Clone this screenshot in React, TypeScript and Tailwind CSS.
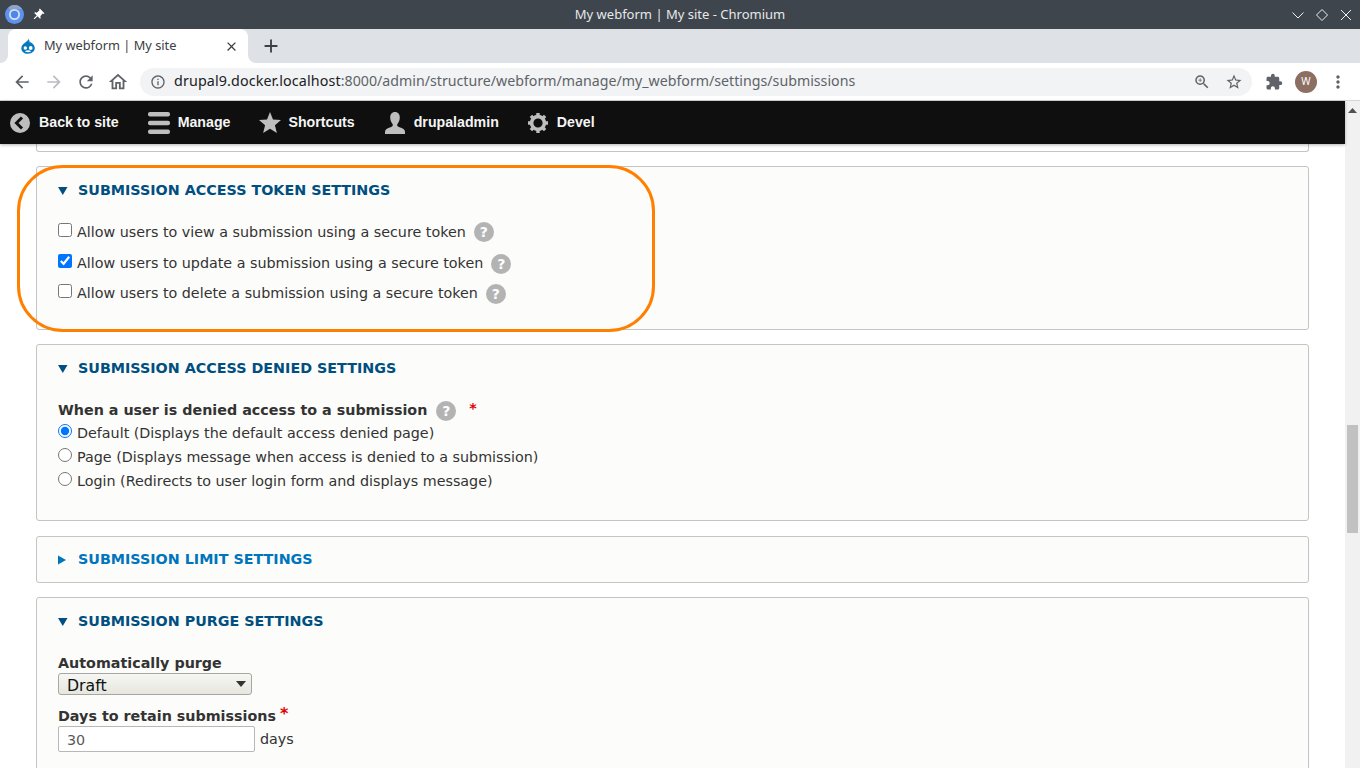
import React from 'react';
import { MdArrowBack, MdArrowForward, MdRefresh, MdOutlineHome, MdInfoOutline, MdZoomIn, MdStarBorder, MdExtension, MdMoreVert, MdAdd, MdClose, MdPushPin } from 'react-icons/md';

const DEJAVU = "font-['DejaVu_Sans',sans-serif]";
const CHROME_FONT = "font-['Noto_Sans',sans-serif]";

function HelpIcon({ className = '' }: { className?: string }) {
  return (
    <span className={`inline-flex h-5 w-5 shrink-0 items-center justify-center rounded-full bg-[#b3b3b3] text-[14px] font-bold leading-none text-white ${className}`}>
      ?
    </span>
  );
}

function Summary({ title, open = true }: { title: string; open?: boolean }) {
  return (
    <div className={`flex items-center pl-[21px] text-[14.3px] font-bold ${open ? 'h-[47px] text-[#004f80]' : 'h-[45px] text-[#0074bd]'}`}>
      <svg width="10" height="10" viewBox="0 0 10 10" className="mr-[10px] shrink-0" fill="currentColor">
        {open ? <path d="M0 1h9.500L4.750 9z" /> : <path d="M0 0.500 8 5 0 9.500z" />}
      </svg>
      <span>{title}</span>
    </div>
  );
}

function Panel({ title, open = true, className = '', children }: { title: string; open?: boolean; className?: string; children?: React.ReactNode }) {
  return (
    <section className={`rounded-[3px] border border-[#c4c4c4] bg-[#fcfcfa] ${className}`}>
      <Summary title={title} open={open} />
      {children}
    </section>
  );
}

function CheckRow({ label, checked = false, className = '', helpClass = 'ml-2' }: { label: string; checked?: boolean; className?: string; helpClass?: string }) {
  return (
    <div className={`flex h-5 items-center ${className}`}>
      <input type="checkbox" defaultChecked={checked} className="mr-[5px] h-[14px] w-[14px] -translate-y-[2px] accent-[#0075ff]" />
      <span className="translate-y-px">{label}</span>
      <HelpIcon className={helpClass} />
    </div>
  );
}

function RadioRow({ label, checked = false }: { label: string; checked?: boolean }) {
  return (
    <div className="flex h-6 items-center">
      <input type="radio" name="denied" defaultChecked={checked} className="mr-[5px] h-[14px] w-[14px] -translate-y-px accent-[#0075ff]" />
      <span className="translate-y-[2px]">{label}</span>
    </div>
  );
}

function ToolbarItem({ icon, label, boxClass = 'w-[22px]' }: { icon: React.ReactNode; label: string; boxClass?: string }) {
  return (
    <div className="flex items-center gap-2">
      <span className={`flex h-[22px] items-center justify-center ${boxClass}`}>{icon}</span>
      <span>{label}</span>
    </div>
  );
}

export default function App() {
  return (
    <div className="flex h-screen w-[1360px] flex-col overflow-hidden bg-white">
      {/* window title */}
      <div className={`flex h-[29px] shrink-0 items-center bg-[#3e454d] text-[13px] text-[#e6e8ea] ${CHROME_FONT}`}>
        <div className="flex w-[200px] items-center">
          <svg width="19" height="19" viewBox="0 0 19 19" className="ml-[5px]">
            <circle cx="9.500" cy="9.500" r="9.500" fill="#5f92ee" />
            <path d="M9.500 4H17a8.500 8.500 0 0 0-13.500-1.500L6 7a4.500 4.500 0 0 1 3.500-3z" fill="#8fa3c4" />
            <circle cx="9.500" cy="9.500" r="4.600" fill="#4f86e6" stroke="#d2e0f5" strokeWidth="1.800" />
          </svg>
          <MdPushPin className="ml-[7px] rotate-45 text-white" size={14} />
        </div>
        <div className="flex-1 text-center">My webform | My site - Chromium</div>
        <div className="flex w-[200px] items-center justify-end gap-[8px] pr-[6px]">
          <svg width="16" height="16" viewBox="0 0 16 16" fill="none" stroke="#eef0f1" strokeWidth="1"><path d="M2.500 5.500 8 11l5.500-5.500" /></svg>
          <svg width="16" height="16" viewBox="0 0 16 16" fill="none" stroke="#eef0f1" strokeWidth="1"><path d="M8 2.500 13.500 8 8 13.500 2.500 8z" /></svg>
          <svg width="16" height="16" viewBox="0 0 16 16" fill="none" stroke="#eef0f1" strokeWidth="1"><path d="m3 3 10 10M13 3 3 13" /></svg>
        </div>
      </div>

      {/* tab strip */}
      <div className={`flex h-[34px] shrink-0 bg-[#dee1e6] text-[12.8px] text-[#3c4043] ${CHROME_FONT}`}>
        <div className="w-2 bg-white"><div className="h-full rounded-br-lg bg-[#dee1e6]" /></div>
        <div className="flex w-[240px] items-center rounded-t-lg bg-white pl-[12px] pr-[9px]">
          <svg width="16" height="16" viewBox="0 0 16 16">
            <path d="M8.500 0.300C8.700 2.400 6.500 3.500 5 4.700 3.200 6 1.300 7.500 1.300 10.200 1.300 13.500 4.200 15.800 8 15.800s6.800-2.400 6.800-5.700c0-2.800-2-4.300-3.700-5.500C9.600 3.500 8.800 2.300 8.500 0.300z" fill="#0678be" />
            <path d="M9 1.800c.3 1.300 1 2 2 2.800-1 .3-1.800-.2-2.400-.8.500-.5.600-1.200.4-2z" fill="#7fc2ee" />
            <circle cx="5.300" cy="10" r="1.700" fill="#ffffff" />
            <circle cx="10.700" cy="10" r="1.900" fill="#ffffff" />
            <path d="M4.800 13.200c2 -1.200 4.500-1.200 6.400 0-1.800 1.400-4.600 1.400-6.400 0z" fill="#ffffff" />
          </svg>
          <span className="ml-2 flex-1">My webform | My site</span>
          <MdClose size={15} className="text-[#3c4043]" />
        </div>
        <div className="w-2 bg-white"><div className="h-full rounded-bl-lg bg-[#dee1e6]" /></div>
        <div className="ml-[4px] flex items-center">
          <MdAdd size={22} className="text-[#3c4043]" />
        </div>
      </div>

      {/* address bar */}
      <div className={`flex h-[38px] shrink-0 items-center border-b border-[#d3d5d8] bg-white text-[#5f6368] ${CHROME_FONT}`}>
        <MdArrowBack size={20} className="ml-3" />
        <MdArrowForward size={20} className="ml-3 text-[#b9bcc0]" />
        <MdRefresh size={20} className="ml-3" />
        <MdOutlineHome size={22} className="ml-[11px]" />
        <div className="ml-[11px] flex h-7 w-[1112px] items-center rounded-full bg-[#f1f3f4]">
          <MdInfoOutline size={16} className="ml-[10px]" />
          <span className="ml-[8px] -translate-y-px text-[14.3px] tracking-[0.12px] text-[#202124]">drupal9.docker.localhost</span>
          <span className="-translate-y-px text-[14.2px]">:8000/admin/structure/webform/manage/my_webform/settings/submissions</span>
          <MdZoomIn size={18} className="ml-auto" />
          <MdStarBorder size={18} className="ml-[14px] mr-[9px]" />
        </div>
        <MdExtension size={18} className="ml-[13px]" />
        <span className="ml-[12px] flex h-[22px] w-[22px] items-center justify-center rounded-full bg-[#8d6e63] text-[10px] text-white">W</span>
        <MdMoreVert size={20} className="ml-[11px]" />
      </div>

      {/* page */}
      <div className="flex min-h-0 flex-1">
        <div className="flex min-w-0 flex-1 flex-col">
          <div className="relative z-10 flex h-[43px] shrink-0 items-center gap-[29px] bg-[#0f0f0f] pl-[9px] font-['Liberation_Sans',sans-serif] text-[14.2px] font-bold text-[#f5f5f5] shadow-[0_1px_3px_rgba(0,0,0,0.3)]">
            <ToolbarItem label="Back to site" icon={
              <svg width="20" height="20" viewBox="0 0 20 20"><circle cx="10" cy="10" r="10" fill="#bebebe" /><path d="M12 4.500 6.500 10l5.500 5.500" fill="none" stroke="#0f0f0f" strokeWidth="3" /></svg>
            } />
            <ToolbarItem label="Manage" icon={
              <svg width="22" height="22" viewBox="0 0 22 22" fill="#bebebe"><rect y="0" width="22" height="4.500" rx="2" /><rect y="8.700" width="22" height="4.500" rx="2" /><rect y="17.500" width="22" height="4.500" rx="2" /></svg>
            } />
            <ToolbarItem label="Shortcuts" boxClass="w-[21px]" icon={
              <svg width="22" height="21" viewBox="0 0 22 21" fill="#bebebe" className="shrink-0"><path d="m11 0 3 7.500 8 .6-6.100 5.100 2 7.800L11 16.700 4.100 21l2-7.800L0 8.100l8-.6z" /></svg>
            } />
            <ToolbarItem label="drupaladmin" icon={
              <svg width="22" height="22" viewBox="0 0 22 22" fill="#bebebe"><path d="M11 0c3.200 0 4.800 2.400 4.800 5.600 0 3-1.400 5.400-2.500 6.600-.5 1.700.6 2.600 3 3.400 2.800 1 4.700 2 4.700 4.400v2H1v-2c0-2.400 1.900-3.400 4.700-4.400 2.400-.8 3.500-1.700 3-3.400C7.600 11 6.200 8.600 6.200 5.600 6.200 2.400 7.800 0 11 0z" /></svg>
            } />
            <ToolbarItem label="Devel" boxClass="w-[21px]" icon={
              <svg width="20" height="20" viewBox="0 0 20 20"><circle cx="10" cy="10" r="6.400" fill="none" stroke="#bebebe" strokeWidth="3.600" /><g stroke="#bebebe" strokeWidth="3.400"><path d="M10 0v4M10 16v4M0 10h4M16 10h4M2.900 2.900l2.800 2.800M14.300 14.300l2.800 2.800M17.100 2.900l-2.800 2.800M5.700 14.300l-2.800 2.800" /></g></svg>
            } />
          </div>

          <div className={`relative flex min-h-0 flex-1 flex-col gap-[14px] overflow-hidden px-[36px] text-[14.3px] text-[#333333] ${DEJAVU}`}>
            <div className="h-[8px] shrink-0 rounded-b-[3px] border-x border-b border-[#c4c4c4] bg-white" />

            <Panel title="SUBMISSION ACCESS TOKEN SETTINGS" className="h-[164px] shrink-0">
              <div className="pl-[21px] pt-[8px]">
                <CheckRow label="Allow users to view a submission using a secure token" />
                <CheckRow label="Allow users to update a submission using a secure token" checked className="mt-[11px]" helpClass="ml-2 translate-y-px" />
                <CheckRow label="Allow users to delete a submission using a secure token" className="mt-[10px]" helpClass="ml-2 translate-y-px" />
              </div>
            </Panel>

            <Panel title="SUBMISSION ACCESS DENIED SETTINGS" className="h-[177px] shrink-0">
              <div className="pl-[21px] pt-[8px]">
                <div className="flex h-5 translate-y-px items-center font-bold">
                  <span>When a user is denied access to a submission</span>
                  <HelpIcon className="ml-[9px]" />
                  <span className="ml-[13px] -translate-y-[2px] text-[#e00000]">*</span>
                </div>
                <RadioRow label="Default (Displays the default access denied page)" checked />
                <RadioRow label="Page (Displays message when access is denied to a submission)" />
                <RadioRow label="Login (Redirects to user login form and displays message)" />
              </div>
            </Panel>

            <Panel title="SUBMISSION LIMIT SETTINGS" open={false} className="mt-px h-[47px] shrink-0" />

            <Panel title="SUBMISSION PURGE SETTINGS" className="h-[240px] shrink-0">
              <div className="pl-[21px] pt-[8px]">
                <div className="flex h-5 translate-y-px items-center font-bold">Automatically purge</div>
                <div className="relative h-[22px] w-[194px]">
                  <select className="h-full w-full appearance-none rounded-[3px] border border-[#a6a6a6] bg-[linear-gradient(#f6f6f3,#e7e7df)] pb-[2px] pl-2 text-[15.7px] text-[#111111]">
                    <option>Draft</option>
                  </select>
                  <svg width="10" height="6" viewBox="0 0 10 6" className="absolute right-[6px] top-[8px]" fill="#333333"><path d="M0 0h10L5 6z" /></svg>
                </div>
                <div className="mt-[11px] flex h-5 translate-y-px items-center font-bold">
                  <span>Days to retain submissions</span>
                  <span className="ml-[4px] -translate-y-[3px] text-[16px] font-bold text-[#e00000]">*</span>
                </div>
                <div className="flex items-center">
                  <input defaultValue="30" className="h-[26px] w-[197px] rounded-[2px] border border-[#b8b8b8] bg-white px-2 pt-[2px] text-[14.3px] text-[#595959]" />
                  <span className="ml-[5px] translate-y-px">days</span>
                </div>
              </div>
            </Panel>

            {/* annotation drawn over the screenshot */}
            <div className="pointer-events-none absolute left-[17px] top-[21px] h-[167px] w-[638px] rounded-[46px] border-[3px] border-[#ff8000]" />
          </div>
        </div>

        {/* scrollbar */}
        <div className="relative w-[15px] shrink-0 bg-[#f1f1f1]">
          <svg width="9" height="5" viewBox="0 0 9 5" className="absolute left-[3px] top-[7px]" fill="#505050"><path d="M4.500 0 9 5H0z" /></svg>
          <div className="absolute left-[2px] top-[324px] h-[108px] w-[11px] bg-[#c1c1c1]" />
        </div>
      </div>
    </div>
  );
}
